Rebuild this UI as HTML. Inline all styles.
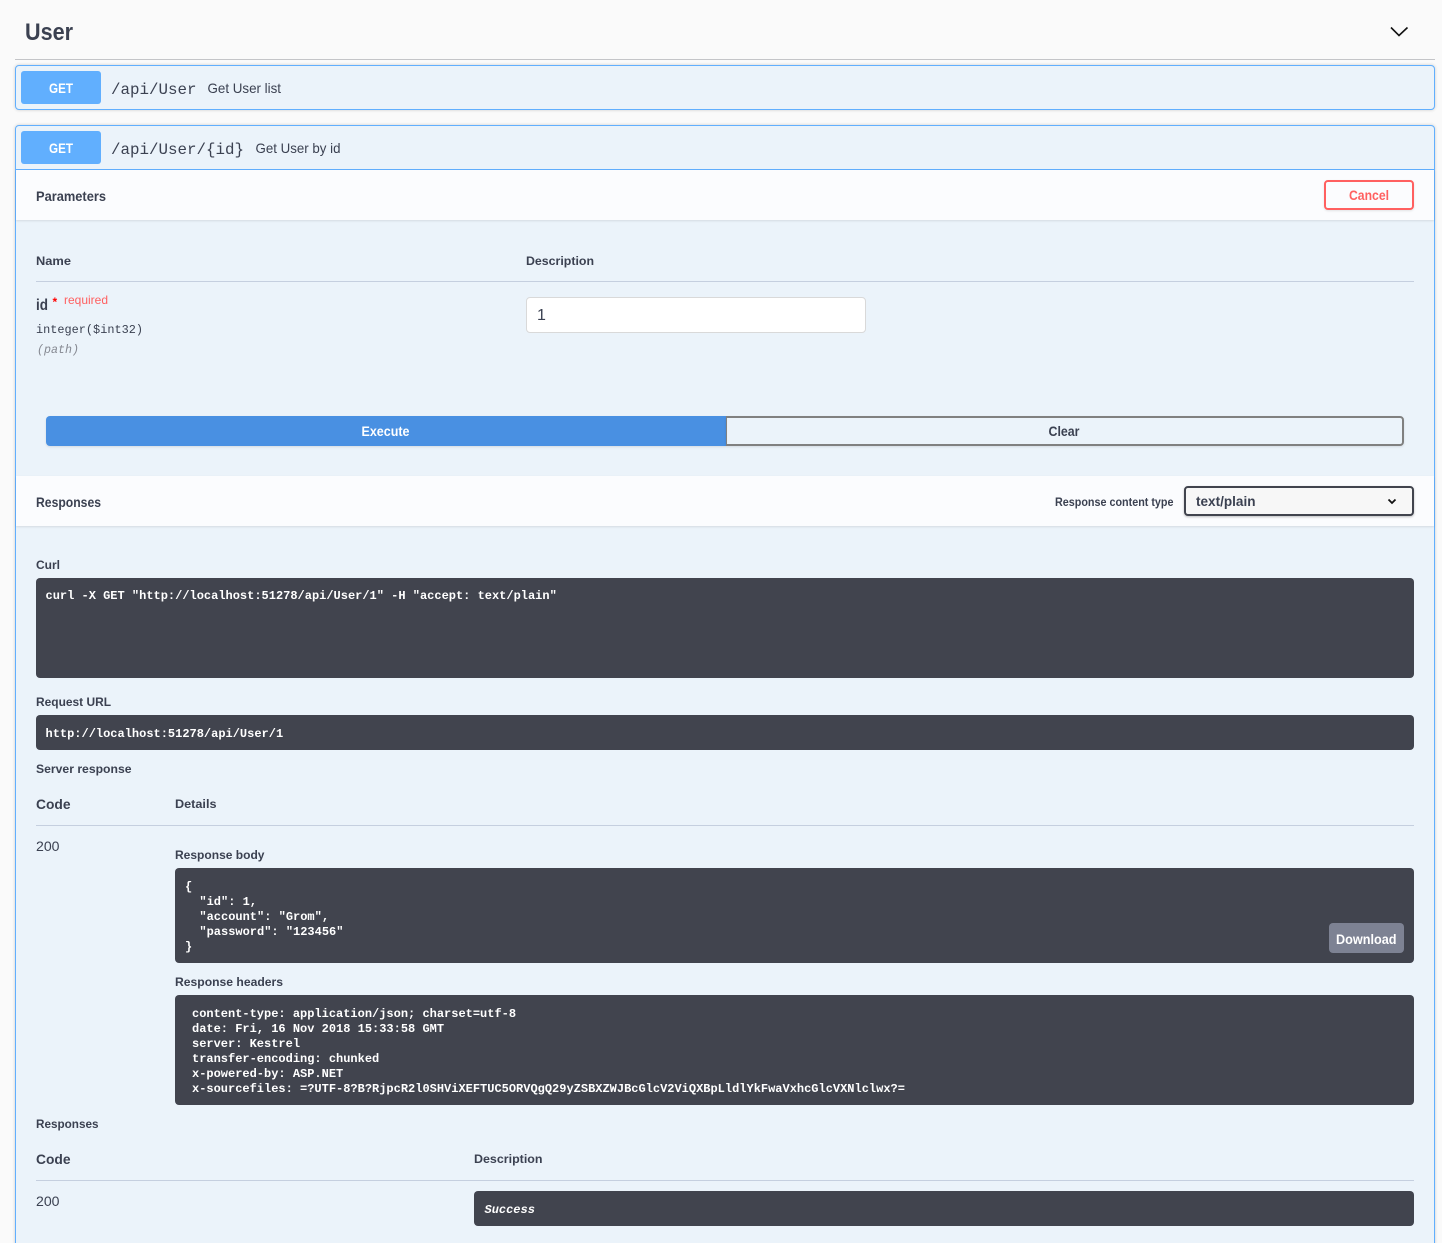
<!DOCTYPE html>
<html lang="en">
<head>
<meta charset="utf-8">
<title>User</title>
<style>
html,body{margin:0;padding:0;width:1442px;height:1243px;overflow:hidden;background:#fafafa}
#page{position:relative;width:1442px;height:1243px;overflow:hidden;background:#fafafa}
.b{position:absolute;box-sizing:border-box}
svg{position:absolute;left:0;top:0}
text{font-family:"Liberation Sans",sans-serif;fill:#3b4151;white-space:pre}
.m{font-family:"Liberation Mono",monospace}
.w{fill:#fff}
.bd{font-weight:700}
.dark{background:#41444e;border-radius:4px}
.rule{height:1px;background:#c5cfdf}
.sec{background:#fbfcfe;left:16px;width:1418px;height:50px;box-shadow:0 1px 2px rgba(0,0,0,.1)}
.get{background:#61affe;border-radius:3px;left:21px;width:80px;height:33px}
.op{left:15px;width:1420px;background:#ebf3fa;border:1px solid #61affe;border-radius:4px;box-shadow:0 0 3px rgba(0,0,0,.19)}
</style>
</head>
<body>
<div id="page">
<div class="b" style="left:15px;top:59px;width:1420px;height:1px;background:#c4c5c8"></div>

<div class="b op" style="top:65px;height:45px"></div>
<div class="b get" style="top:71px"></div>

<div class="b op" style="top:125px;height:1140px;border-radius:4px 4px 0 0"></div>
<div class="b get" style="top:131px"></div>
<div class="b" style="left:16px;top:169px;width:1418px;height:1px;background:#61affe"></div>

<div class="b sec" style="top:170px"></div>
<div class="b" style="left:1324px;top:180px;width:90px;height:30px;border:2px solid #ff6060;border-radius:4px;background:transparent;box-shadow:0 1px 2px rgba(0,0,0,.1)"></div>

<div class="b rule" style="left:36px;top:281px;width:1378px"></div>
<div class="b" style="left:526px;top:297px;width:340px;height:36px;background:#fff;border:1px solid #d9d9d9;border-radius:4px"></div>

<div class="b" style="left:46px;top:416px;width:680px;height:30px;background:#4990e2;border-radius:4px 0 0 4px;box-shadow:0 1px 2px rgba(0,0,0,.1)"></div>
<div class="b" style="left:726px;top:416px;width:678px;height:30px;border:2px solid #808080;border-left:1px solid #808080;border-radius:0 4px 4px 0;box-shadow:0 1px 2px rgba(0,0,0,.1)"></div>

<div class="b sec" style="top:476px"></div>
<div class="b" style="left:1184px;top:486px;width:230px;height:30px;background:#f7f7f7;border:2px solid #41444e;border-radius:4px;box-shadow:0 1px 2px rgba(0,0,0,.25)"></div>

<div class="b dark" style="left:36px;top:578px;width:1378px;height:100px"></div>
<div class="b dark" style="left:36px;top:715px;width:1378px;height:35px"></div>
<div class="b rule" style="left:36px;top:825px;width:1378px"></div>
<div class="b dark" style="left:175px;top:868px;width:1239px;height:95px"></div>
<div class="b" style="left:1329px;top:923px;width:75px;height:30px;background:#7d8293;border-radius:4px"></div>
<div class="b dark" style="left:175px;top:995px;width:1239px;height:110px"></div>
<div class="b rule" style="left:36px;top:1180px;width:1378px"></div>
<div class="b dark" style="left:474px;top:1191px;width:940px;height:35px"></div>

<svg width="1442" height="1243" viewBox="0 0 1442 1243" xmlns="http://www.w3.org/2000/svg">
<path d="M1391 27.5L1399 35.5L1407.5 27.5" fill="none" stroke="#111" stroke-width="1.6"/>
<path d="M1388.5 499.5L1392 503L1395.5 499.5" fill="none" stroke="#111" stroke-width="1.8"/>

<text x="25" y="40" class="bd" font-size="24" textLength="48" lengthAdjust="spacingAndGlyphs">User</text>

<text x="49" y="93" class="bd w" font-size="14" textLength="24" lengthAdjust="spacingAndGlyphs">GET</text>
<text x="111" y="94" class="m" font-size="16" textLength="85.5" lengthAdjust="spacingAndGlyphs">/api/User</text>
<text x="207.5" y="93" font-size="14" textLength="73.5" lengthAdjust="spacingAndGlyphs">Get User list</text>

<text x="49" y="153" class="bd w" font-size="14" textLength="24" lengthAdjust="spacingAndGlyphs">GET</text>
<text x="111" y="154" class="m" font-size="16" textLength="133" lengthAdjust="spacingAndGlyphs">/api/User/{id}</text>
<text x="255.5" y="153" font-size="14" textLength="85" lengthAdjust="spacingAndGlyphs">Get User by id</text>

<text x="36" y="201" class="bd" font-size="14" textLength="70" lengthAdjust="spacingAndGlyphs">Parameters</text>
<text x="1349" y="200" class="bd" font-size="14" style="fill:#ff6060" textLength="40" lengthAdjust="spacingAndGlyphs">Cancel</text>

<text x="36" y="265" class="bd" font-size="12" textLength="35" lengthAdjust="spacingAndGlyphs">Name</text>
<text x="526" y="265" class="bd" font-size="12" textLength="68" lengthAdjust="spacingAndGlyphs">Description</text>

<text x="36" y="310" class="bd" font-size="16" textLength="12" lengthAdjust="spacingAndGlyphs">id</text>
<text x="52.5" y="306" class="bd" font-size="12" style="fill:#f00">*</text>
<text x="64" y="304" font-size="12" style="fill:#ff6060" textLength="44" lengthAdjust="spacingAndGlyphs">required</text>
<text x="36" y="333" class="m" font-size="12" textLength="107" lengthAdjust="spacingAndGlyphs">integer($int32)</text>
<text x="37" y="353" class="m" font-size="12" font-style="italic" style="fill:#858891" textLength="42" lengthAdjust="spacingAndGlyphs">(path)</text>
<text x="537" y="320" font-size="16">1</text>

<text x="361.5" y="436" class="bd w" font-size="14" textLength="48" lengthAdjust="spacingAndGlyphs">Execute</text>
<text x="1048.5" y="436" class="bd" font-size="14" textLength="31" lengthAdjust="spacingAndGlyphs">Clear</text>

<text x="36" y="507" class="bd" font-size="14" textLength="65" lengthAdjust="spacingAndGlyphs">Responses</text>
<text x="1055" y="506" class="bd" font-size="12" textLength="118.5" lengthAdjust="spacingAndGlyphs">Response content type</text>
<text x="1196" y="506" class="bd" font-size="14" textLength="59.5" lengthAdjust="spacingAndGlyphs">text/plain</text>

<text x="36" y="569" class="bd" font-size="12" textLength="24" lengthAdjust="spacingAndGlyphs">Curl</text>
<text x="45.5" y="599" class="m bd w" font-size="12">curl -X GET "http://localhost:51278/api/User/1" -H "accept: text/plain"</text>

<text x="36" y="706" class="bd" font-size="12" textLength="75" lengthAdjust="spacingAndGlyphs">Request URL</text>
<text x="45.5" y="737" class="m bd w" font-size="12">http://localhost:51278/api/User/1</text>

<text x="36" y="773" class="bd" font-size="12" textLength="95.5" lengthAdjust="spacingAndGlyphs">Server response</text>

<text x="36" y="809" class="bd" font-size="14" textLength="34.5" lengthAdjust="spacingAndGlyphs">Code</text>
<text x="175" y="808" class="bd" font-size="12" textLength="41.5" lengthAdjust="spacingAndGlyphs">Details</text>

<text x="36" y="851" font-size="14" textLength="23.5" lengthAdjust="spacingAndGlyphs">200</text>
<text x="175" y="859" class="bd" font-size="12" textLength="89.5" lengthAdjust="spacingAndGlyphs">Response body</text>

<text x="185" y="890" class="m bd w" font-size="12">{</text>
<text x="185" y="905" class="m bd w" font-size="12">  "id": 1,</text>
<text x="185" y="920" class="m bd w" font-size="12">  "account": "Grom",</text>
<text x="185" y="935" class="m bd w" font-size="12">  "password": "123456"</text>
<text x="185" y="950" class="m bd w" font-size="12">}</text>
<text x="1336" y="944" class="bd w" font-size="14" textLength="60.5" lengthAdjust="spacingAndGlyphs">Download</text>

<text x="175" y="986" class="bd" font-size="12" textLength="108" lengthAdjust="spacingAndGlyphs">Response headers</text>

<text x="192" y="1017" class="m bd w" font-size="12">content-type: application/json; charset=utf-8</text>
<text x="192" y="1032" class="m bd w" font-size="12">date: Fri, 16 Nov 2018 15:33:58 GMT</text>
<text x="192" y="1047" class="m bd w" font-size="12">server: Kestrel</text>
<text x="192" y="1062" class="m bd w" font-size="12">transfer-encoding: chunked</text>
<text x="192" y="1077" class="m bd w" font-size="12">x-powered-by: ASP.NET</text>
<text x="192" y="1092" class="m bd w" font-size="12">x-sourcefiles: =?UTF-8?B?RjpcR2l0SHViXEFTUC5ORVQgQ29yZSBXZWJBcGlcV2ViQXBpLldlYkFwaVxhcGlcVXNlclwx?=</text>

<text x="36" y="1128" class="bd" font-size="12" textLength="62.5" lengthAdjust="spacingAndGlyphs">Responses</text>
<text x="36" y="1164" class="bd" font-size="14" textLength="34.5" lengthAdjust="spacingAndGlyphs">Code</text>
<text x="474" y="1163" class="bd" font-size="12" textLength="68.5" lengthAdjust="spacingAndGlyphs">Description</text>
<text x="36" y="1206" font-size="14" textLength="23.5" lengthAdjust="spacingAndGlyphs">200</text>
<text x="484.5" y="1213" class="m bd w" font-size="12" font-style="italic">Success</text>
</svg>
</div>
</body>
</html>
